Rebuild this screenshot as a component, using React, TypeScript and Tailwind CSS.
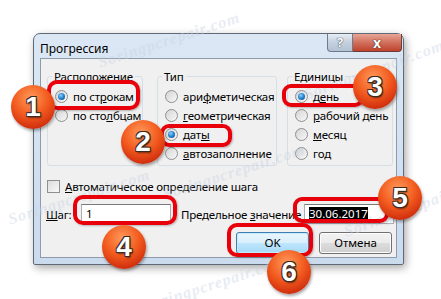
import React from "react";

function Radio({ checked }: { checked?: boolean }) {
  return (
    <span className="flex h-[13px] w-[13px] shrink-0 items-center justify-center rounded-full border border-[#8e8f8f] bg-[linear-gradient(135deg,#d4d4d4,#f8f8f8)]">
      {checked && (
        <span className="h-[7px] w-[7px] rounded-full bg-[radial-gradient(circle_at_40%_35%,#8fd0ff_0%,#2a8ad4_45%,#0f3f72_100%)]" />
      )}
    </span>
  );
}

function Option({ checked, children }: { checked?: boolean; children: React.ReactNode }) {
  return (
    <div className="flex h-[19px] items-center gap-[5px] whitespace-nowrap">
      <Radio checked={checked} />
      <span className="text-[11.5px] leading-[15px] tracking-[-0.2px] text-black">{children}</span>
    </div>
  );
}

function Group({ title, width, children }: { title: string; width: string; children: React.ReactNode }) {
  return (
    <fieldset className={`${width} h-[97px] min-w-0 shrink-0 rounded-[3px] border border-[#d5dfe5] px-[7px] pt-[3px]`}>
      <legend className="ml-[-3px] whitespace-nowrap px-[2px] text-[11.5px] leading-[15px] tracking-[-0.2px] text-black">{title}</legend>
      {children}
    </fieldset>
  );
}

function Badge({ n, cls }: { n: string; cls: string }) {
  return (
    <div
      className={`absolute flex h-[44px] w-[44px] items-center justify-center rounded-full bg-[radial-gradient(circle_at_45%_30%,#ff9a5a_0%,#f25a1e_45%,#c8250a_85%,#b01e08_100%)] shadow-[1px_2px_3px_rgba(0,0,0,0.35)] ${cls}`}
    >
      <span className="font-['Liberation_Sans',Arial,sans-serif] text-[28px] font-bold leading-none text-white [text-shadow:-1px_-1px_0_#3a2a22,1px_-1px_0_#3a2a22,-1px_1px_0_#3a2a22,1px_1px_0_#3a2a22,1px_2px_2px_rgba(0,0,0,0.5)]">
        {n}
      </span>
    </div>
  );
}

function Mark({ cls }: { cls: string }) {
  return (
    <div
      className={`pointer-events-none absolute whitespace-nowrap font-['Liberation_Serif',serif] text-[16px] italic font-bold tracking-[1px] text-[#c8d2e4] opacity-40 ${cls}`}
    >
      Soringpcrepair.com
    </div>
  );
}

export default function App() {
  return (
    <div className="relative h-[299px] w-[441px] overflow-hidden bg-white font-['Noto_Sans',Arial,sans-serif]">
      <div className="pl-[33px] pt-[33px]">
        {/* window */}
        <div className="flex h-[232px] w-[371px] flex-col rounded-t-[7px] rounded-b-[2px] border border-[#5f6a77] bg-[linear-gradient(#dbe7f4,#cadbee)] shadow-[2px_3px_8px_rgba(0,0,0,0.35)]">
          <div className="flex h-[24px] items-start justify-between">
            <span className="pl-[6px] pt-[7px] text-[12px] leading-[15px] text-black">Прогрессия</span>
            <div className="mr-[1px] flex h-[18px]">
              <div className="flex w-[26px] items-center justify-center rounded-bl-[4px] border border-t-0 border-[#6d7b8c] bg-[linear-gradient(#e6edf5,#c3d0de_50%,#b3c3d4)] text-[13px] font-bold leading-none text-white [text-shadow:0_0_1px_#334,0_0_1px_#334]">
                ?
              </div>
              <div className="flex w-[49px] items-center justify-center rounded-br-[4px] border border-l-0 border-t-0 border-[#6d3c36] bg-[linear-gradient(#e8a596,#d0705d_50%,#c0432d)] text-[14px] font-bold leading-none text-white [text-shadow:0_0_1px_#311,0_0_1px_#311]">
                x
              </div>
            </div>
          </div>
          {/* client */}
          <div className="mx-[6px] mb-[6px] flex flex-1 flex-col border border-[#8d9bab] bg-[#f0f0f0] pl-[6px] pr-[4px] pt-[10px]">
            <div className="flex">
              <Group title="Расположение" width="w-[96px]">
                <Option checked>
                  по ст<u>р</u>окам
                </Option>
                <Option>
                  по сто<u>л</u>бцам
                </Option>
              </Group>
              <div className="ml-[14px]">
                <Group title="Тип" width="w-[120px]">
                  <Option>
                    ари<u>ф</u>метическая
                  </Option>
                  <Option>
                    <u>г</u>еометрическая
                  </Option>
                  <Option checked>
                    дат<u>ы</u>
                  </Option>
                  <Option>
                    <u>а</u>втозаполнение
                  </Option>
                </Group>
              </div>
              <div className="ml-[10px]">
                <Group title="Единицы" width="w-[106px]">
                  <Option checked>
                    д<u>е</u>нь
                  </Option>
                  <Option>
                    <u>р</u>абочий день
                  </Option>
                  <Option>
                    <u>м</u>есяц
                  </Option>
                  <Option>
                    го<u>д</u>
                  </Option>
                </Group>
              </div>
            </div>

            <div className="mt-[13px] flex items-center gap-[5px] whitespace-nowrap">
              <span className="h-[13px] w-[13px] border border-[#8e8f8f] bg-[linear-gradient(135deg,#dcdcdc,#fafafa)]" />
              <span className="text-[11.5px] leading-[15px] tracking-[-0.2px] text-black">
                <u>А</u>втоматическое определение шага
              </span>
            </div>

            <div className="mt-[10px] flex h-[20px] items-center whitespace-nowrap">
              <span className="ml-[-1px] w-[34px] shrink-0 text-[11.5px] leading-[15px] tracking-[-0.3px] text-black">
                <u>Ш</u>аг:
              </span>
              <div className="ml-[1px] flex h-[20px] w-[90px] shrink-0 items-center border border-[#abadb3] border-t-[#7a7a7a] bg-white pl-[4px] text-[11.5px] text-black">
                1
              </div>
              <span className="ml-[10px] w-[123px] shrink-0 text-[11.5px] leading-[15px] tracking-[-0.2px] text-black">
                Предельное <u>з</u>начение
              </span>
              <div className="flex h-[20px] w-[90px] shrink-0 items-center border border-[#abadb3] border-t-[#7a7a7a] bg-white pl-[4px] text-[11.5px] leading-[14px]">
                <span className="bg-black text-white">30.06.2017</span>
              </div>
            </div>

            <div className="mt-[8px] flex justify-end gap-[10px]">
              <div className="flex h-[22px] w-[73px] items-center justify-center rounded-[3px] border border-[#3c7fb1] bg-[linear-gradient(#eaf6fd,#d9f0fc_50%,#bee6fd_50%,#a7d9f5)] text-[11.5px] text-black shadow-[inset_0_0_0_1px_#c6eafd]">
                OK
              </div>
              <div className="flex h-[22px] w-[73px] items-center justify-center rounded-[3px] border border-[#707070] bg-[linear-gradient(#f2f2f2,#ebebeb_50%,#dddddd_50%,#cfcfcf)] text-[11.5px] text-black shadow-[inset_0_0_0_1px_#fcfcfc]">
                Отмена
              </div>
            </div>
          </div>
        </div>
      </div>

      {/* watermarks */}
      <Mark cls="left-[95px] top-[28px] -rotate-[18deg]" />
      <Mark cls="left-[300px] top-[58px] -rotate-[20deg]" />
      <Mark cls="left-[5px] top-[185px] -rotate-[18deg]" />
      <Mark cls="left-[160px] top-[160px] -rotate-[18deg]" />
      <Mark cls="left-[340px] top-[195px] -rotate-[20deg]" />
      <Mark cls="left-[140px] top-[272px] -rotate-[18deg]" />

      {/* annotation frames */}
      <div className="absolute left-[47px] top-[80px] h-[30px] w-[93px] rounded-[10px] border-[4px] border-[#e8000a] shadow-[1px_1px_2px_rgba(0,0,0,0.25)]" />
      <div className="absolute left-[160px] top-[124px] h-[23px] w-[72px] rounded-[9px] border-[4px] border-[#e8000a] shadow-[1px_1px_2px_rgba(0,0,0,0.25)]" />
      <div className="absolute left-[282px] top-[84px] h-[23px] w-[82px] rounded-[9px] border-[4px] border-[#e8000a] shadow-[1px_1px_2px_rgba(0,0,0,0.25)]" />
      <div className="absolute left-[73px] top-[195px] h-[30px] w-[104px] rounded-[10px] border-[4px] border-[#e8000a] shadow-[1px_1px_2px_rgba(0,0,0,0.25)]" />
      <div className="absolute left-[293px] top-[197px] h-[26px] w-[96px] rounded-[9px] border-[4px] border-[#e8000a] shadow-[1px_1px_2px_rgba(0,0,0,0.25)]" />
      <div className="absolute left-[227px] top-[223px] h-[34px] w-[86px] rounded-[10px] border-[4px] border-[#e8000a] shadow-[1px_1px_2px_rgba(0,0,0,0.25)]" />

      <Badge n="1" cls="left-[11px] top-[85px]" />
      <Badge n="2" cls="left-[121px] top-[120px]" />
      <Badge n="3" cls="left-[353px] top-[65px]" />
      <Badge n="4" cls="left-[102px] top-[225px]" />
      <Badge n="5" cls="left-[378px] top-[176px]" />
      <Badge n="6" cls="left-[267px] top-[250px]" />
    </div>
  );
}
